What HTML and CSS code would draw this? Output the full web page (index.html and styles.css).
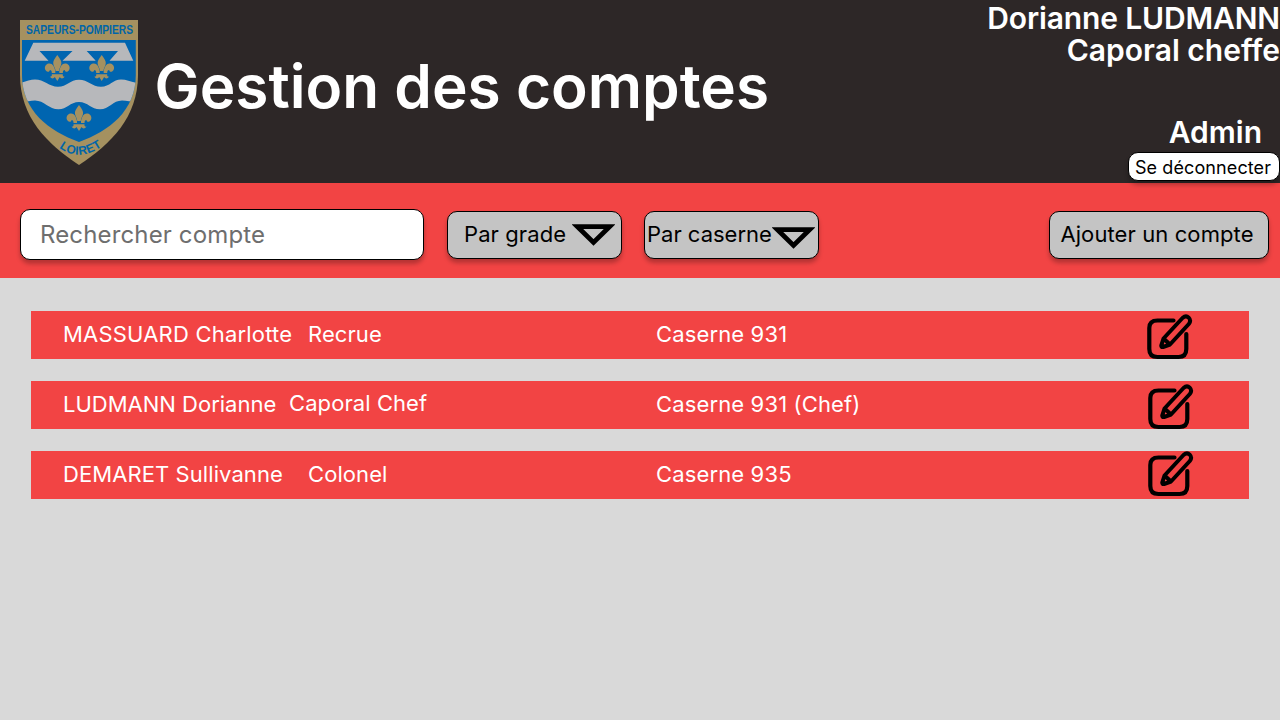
FILE: index.html
```html
<!DOCTYPE html>
<html lang="fr">
<head>
<meta charset="utf-8">
<title>Gestion des comptes</title>
<link rel="stylesheet" href="styles.css">
</head>
<body>
<svg class="defs" width="0" height="0" aria-hidden="true">
  <symbol id="edit" viewBox="0 0 46 46">
    <path d="M26.500 6.500H10.500Q2.300 6.500 2.300 14V35Q2.300 43 10.500 43H31.500Q39.300 43 39.300 35V20" fill="none" stroke="#000" stroke-width="4.200" stroke-linecap="round"/>
    <path d="M16.500 24.500L35.500 4Q39 1 41.700 3.700Q44.500 6.600 41.800 10L23 30.500L16 33Q14 33.300 14.300 31.300ZM16.500 24.500L23 30.500" fill="none" stroke="#000" stroke-width="4" stroke-linejoin="round"/>
  </symbol>
  <symbol id="arrow" viewBox="0 0 43 23">
    <path d="M5.500 2.700H37.500L21.500 18.400Z" fill="none" stroke="#000" stroke-width="4.800"/>
  </symbol>
</svg>
<header class="header">
  <svg class="logo" viewBox="0 0 118 145" role="img" aria-label="Sapeurs-Pompiers Loiret">
    <defs>
      <g id="fleur">
        <path d="M0 0C-3 4-4.500 6-4 9C-3.700 11-2 13-1.700 16H1.700C2 13 3.700 11 4 9C4.500 6 3 4 0 0Z"/>
        <path d="M-2 16C-3 11-5 8-8.500 8.500C-12 9-13.500 13-11.500 15.500C-10 17.500-7.500 17-7.500 15C-6 15-5.500 16-5.500 18H-2ZM2 16C3 11 5 8 8.500 8.500C12 9 13.500 13 11.500 15.500C10 17.500 7.500 17 7.500 15C6 15 5.500 16 5.500 18H2Z"/>
        <path d="M-5.500 19.300H5.500C5 21 6.500 22 7.500 21.500C6 24 3.500 24 2.500 22L0 26L-2.500 22C-3.500 24-6 24-7.500 21.500C-6.500 22-5 21-5.500 19.300Z"/>
      </g>
      <path id="curve" d="M39 127.500Q59 143 84 125"/>
      <clipPath id="field"><path d="M2 20H115.800V55C115.800 91 89 111 59 122C29 111 2 91 2 55Z"/></clipPath>
    </defs>
    <path d="M0 0H118V55C118 97 91 124 59 145C27 124 0 97 0 55Z" fill="#a59160"/>
    <g clip-path="url(#field)">
      <path d="M2 20H116V123H2Z" fill="#0065b0"/>
      <path d="M13.300 22.700H105L113.300 40.700H89.500L98 31H66.700L75.700 40.700H42.500L52.500 31H19.500L28.500 40.700H4.700Z" fill="#b7b8bb"/>
      <path d="M0 63C5 62 10 59.500 15 59.500C24 59.500 29 66.700 38 66.700C47 66.700 50 59.700 59 59.700C68 59.700 72 66.700 81 66.700C90 66.700 93 59.500 101 59.500C107 59.500 111 62 118 63V83C114 82 107 80.500 102 80.500C93 80.500 89 89.300 80 89.300C71 89.300 68 82 59 82C50 82 47 89.300 38.500 89.300C29 89.300 24 80.500 15 80.500C10 80.500 5 82 0 83Z" fill="#b7b8bb"/>
    </g>
    <g fill="#a59160">
      <use href="#fleur" x="37.300" y="35"/>
      <use href="#fleur" x="81.700" y="35"/>
      <use href="#fleur" x="59" y="85"/>
    </g>
    <text class="logo-text" x="6" y="14" textLength="107" lengthAdjust="spacingAndGlyphs">SAPEURS-POMPIERS</text>
    <text class="logo-text logo-town"><textPath href="#curve">LOIRET</textPath></text>
  </svg>
  <h1 class="title">Gestion des comptes</h1>
  <div class="user">
    <div class="user-name user-full">Dorianne LUDMANN</div>
    <div class="user-name">Caporal cheffe</div>
    <div class="role">Admin</div>
    <button class="button logout">Se déconnecter</button>
  </div>
</header>
<section class="toolbar">
  <input class="search" type="text" placeholder="Rechercher compte">
  <button class="button filter filter-grade"><span>Par grade</span><svg class="arrow"><use href="#arrow"/></svg></button>
  <button class="button filter filter-station"><span>Par caserne</span><svg class="arrow"><use href="#arrow"/></svg></button>
  <button class="button add">Ajouter un compte</button>
</section>
<main class="accounts">
  <div class="account account-first">
    <span class="name">MASSUARD Charlotte</span><span class="grade">Recrue</span><span class="station">Caserne 931</span><svg class="edit"><use href="#edit"/></svg>
  </div>
  <div class="account account-chief">
    <span class="name">LUDMANN Dorianne</span><span class="grade">Caporal Chef</span><span class="station">Caserne 931 (Chef)</span><svg class="edit"><use href="#edit"/></svg>
  </div>
  <div class="account account-last">
    <span class="name">DEMARET Sullivanne</span><span class="grade">Colonel</span><span class="station">Caserne 935</span><svg class="edit"><use href="#edit"/></svg>
  </div>
</main>
</body>
</html>
```
FILE: styles.css
```css
* { box-sizing: border-box; }
body {
  margin: 0;
  min-height: 720px;
  background: #d9d9d9;
  font-family: Inter, "Liberation Sans", sans-serif;
  overflow: hidden;
}
.defs { display: block; }
.header {
  display: flex;
  height: 183px;
  padding-left: 20px;
  background: #2d2727;
  color: #fff;
}
.logo { width: 118px; height: 145px; margin-top: 20px; }
.logo-text { font: bold 12px "Liberation Sans", sans-serif; fill: #0065a8; }
.logo-town { letter-spacing: .5px; }
.title {
  margin: 49px 0 0 16.500px;
  font-size: 60.300px;
  font-weight: 600;
  line-height: 76px;
  white-space: nowrap;
}
.user {
  display: flex;
  flex-direction: column;
  align-items: flex-end;
  margin-left: auto;
  padding-top: 2px;
  font-size: 30px;
  font-weight: 600;
  line-height: 32px;
  white-space: nowrap;
}
.user-full { letter-spacing: -.14px; }
.role { margin: 50px 18px 4px 0; }
.button {
  border: 1px solid #000;
  border-radius: 10px;
  background: #c4c4c4;
  box-shadow: 0 4px 4px rgba(0, 0, 0, .25);
  color: #000;
  font-family: inherit;
  font-size: 22px;
  font-weight: 400;
  letter-spacing: .1px;
  padding: 0;
  white-space: nowrap;
}
.logout { width: 152px; height: 29px; padding: 1px 2px 0 0; background: #fff; font-size: 18px; line-height: 27px; }
.toolbar {
  display: flex;
  height: 95px;
  padding: 26px 11px 0 20px;
  background: #f24444;
}
.search {
  width: 404px;
  height: 51px;
  padding: 0 19px;
  border: 1px solid #000;
  border-radius: 10px;
  box-shadow: 0 4px 4px rgba(0, 0, 0, .25);
  background: #fff;
  font: 400 24px Inter, sans-serif;
  letter-spacing: .14px;
}
.search::placeholder { color: #6e6e6e; opacity: 1; }
.filter, .add { height: 48px; margin-top: 2px; line-height: 44px; }
.filter { display: flex; width: 175px; }
.filter-grade { margin-left: 23px; padding-left: 16px; }
.filter-station { margin-left: 22px; padding-left: 2px; letter-spacing: 0; }
.arrow { width: 43px; height: 23px; flex: none; }
.filter-grade .arrow { margin: 12px 6px 0 auto; }
.filter-station .arrow { margin: 15px 3px 0 auto; }
.add { width: 220px; margin-left: auto; padding: 0 4px 2px 0; }
.accounts { display: grid; gap: 22px; padding: 33px 31px; }
.account {
  display: grid;
  grid-template-columns: 245px 348px 491px 46px;
  height: 48px;
  padding-left: 32px;
  background: #f24444;
  color: #fff;
  font-size: 22px;
  font-weight: 400;
  letter-spacing: .08px;
  line-height: 47px;
  white-space: nowrap;
}
.account-first .name { letter-spacing: .2px; }
.account-chief { grid-template-columns: 226px 367px 492px 46px; }
.account-chief .name { letter-spacing: 0; }
.account-chief .grade { line-height: 45px; }
.station { letter-spacing: .14px; }
.account-last { grid-template-columns: 245px 348px 492px 46px; }
.edit { width: 46px; height: 46px; margin-top: 3px; }
.account-last .edit { margin-top: 0; }
```
